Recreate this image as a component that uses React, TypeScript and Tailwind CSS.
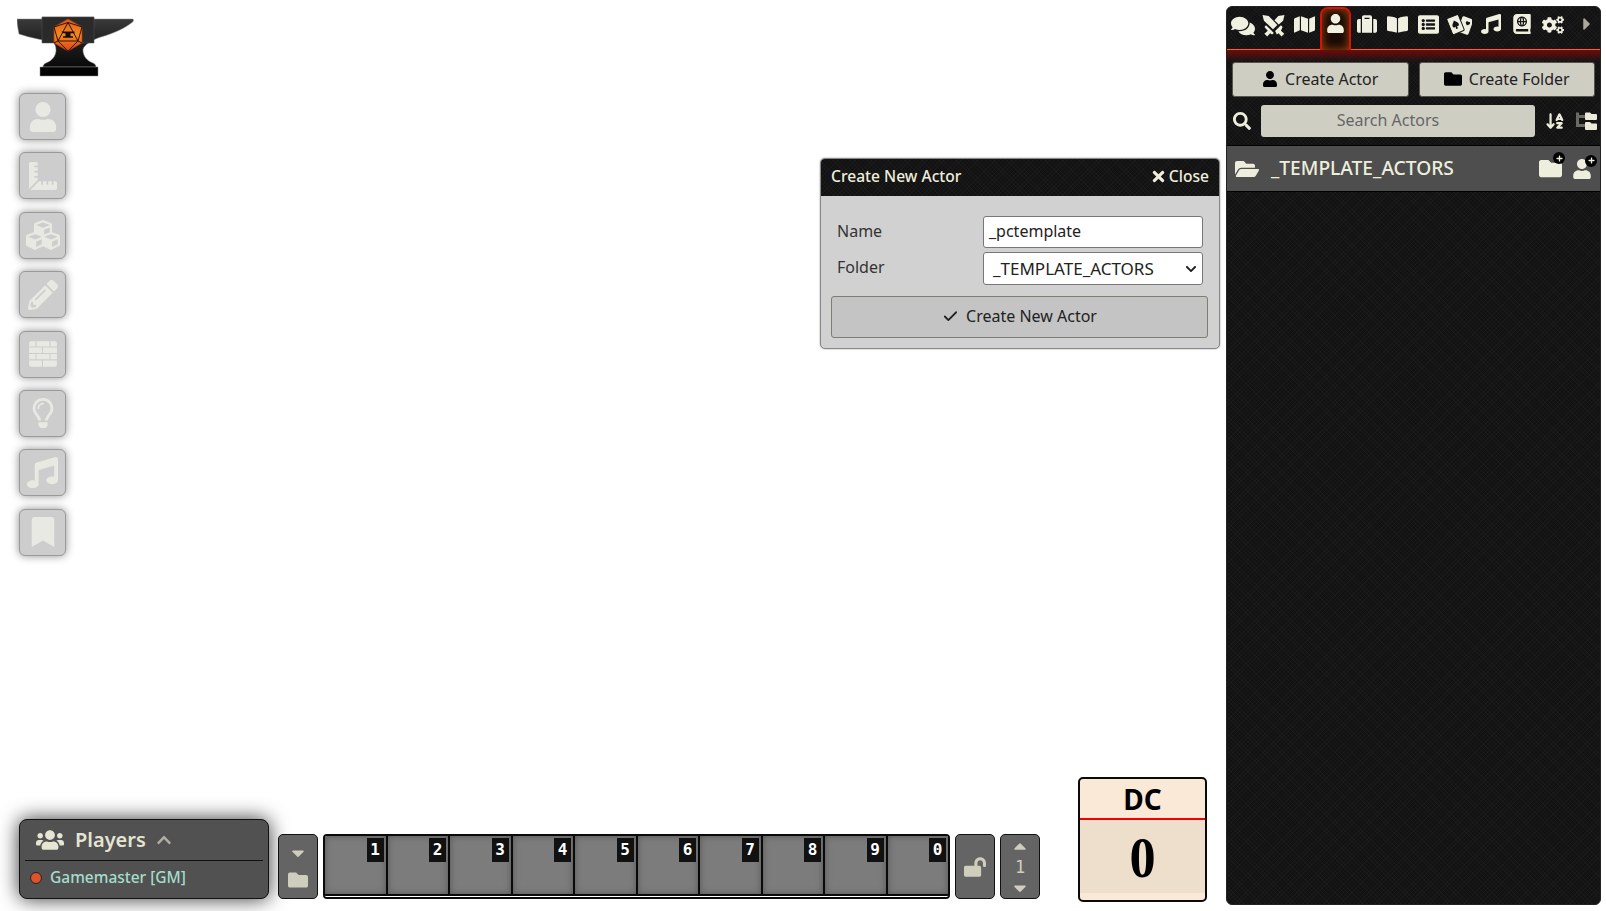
import React from "react";
import {
  FaComments, FaMap, FaUser, FaSuitcase, FaBookOpen, FaListAlt, FaMusic, FaAtlas, FaCogs, FaCaretRight,
  FaFolder, FaFolderOpen, FaSearch, FaTimes, FaUsers, FaChevronUp,
  FaCaretDown, FaCaretUp, FaLockOpen, FaRulerCombined, FaCubes, FaPencilAlt, FaRegLightbulb, FaBookmark, FaChevronDown, FaPlus,
} from "react-icons/fa";
import { FaArrowDownAZ } from "react-icons/fa6";
import { Check } from "lucide-react";

const texture = "bg-[#121212] bg-[repeating-linear-gradient(45deg,rgba(255,255,255,0.02)_0px,rgba(255,255,255,0.02)_1px,transparent_1px,transparent_3px),repeating-linear-gradient(-45deg,rgba(255,255,255,0.02)_0px,rgba(255,255,255,0.02)_1px,transparent_1px,transparent_3px)]";

function Swords({ className }: { className?: string }) {
  return (
    <svg viewBox="0 0 24 24" className={className} fill="currentColor">
      <path d="M0.500 1l6.500 1 9 9.500-4.500 4.500L2 7z" />
      <path d="M23.500 1L17 2l-4 4.500 4.500 4.500L22 7z" />
      <path d="M2.500 13.500l1.800-1.800 8 8L10.500 21.500l-2-1.500-3 3.500-3-3 3.500-3z" />
      <path d="M21.500 13.500l-1.800-1.800-6 6 1.800 3.800 1.800-1.500 3 3.500 3-3-3.500-3z" />
    </svg>
  );
}

function Cards({ className }: { className?: string }) {
  return (
    <svg viewBox="0 0 26 22" className={className}>
      <g transform="rotate(20 19 12)">
        <rect x="13" y="3" width="12" height="17" rx="1.500" fill="currentColor" />
        <path d="M20.500 7c-.8-1-2.300-.3-2.300 1 0 1.200 1.300 2 2.300 3 1-1 2.300-1.800 2.300-3 0-1.300-1.500-2-2.300-1z" fill="#121212" />
      </g>
      <g transform="rotate(-22 9 11)">
        <rect x="2.500" y="1.500" width="13" height="18" rx="1.500" fill="currentColor" stroke="#121212" strokeWidth="1" />
        <path d="M9 6c-1.500 2-3.500 3.300-3.500 5.200 0 1.500 1.800 2.200 2.900 1.200L7.800 15h2.400l-.6-2.600c1.100 1 2.900.3 2.900-1.200C12.500 9.300 10.500 8 9 6z" fill="#121212" />
      </g>
    </svg>
  );
}

function Bricks({ className }: { className?: string }) {
  return (
    <svg viewBox="0 0 28 28" className={className} fill="currentColor">
      <path d="M1 4a2 2 0 0 1 2-2h4v5H1zM8 2h12v5H8zM21 2h4a2 2 0 0 1 2 2v3h-6zM1 8h12v5H1zM14 8h13v5H14zM1 14h6v5H1zM8 14h12v5H8zM21 14h6v5h-6zM1 20h12v6H3a2 2 0 0 1-2-2zM14 20h13v4a2 2 0 0 1-2 2H14z" />
    </svg>
  );
}

function FolderTree({ className }: { className?: string }) {
  return (
    <svg viewBox="0 0 22 18" className={className}>
      <path d="M1 0.500h3v2.500h6v3H4v6h6v3H1z" fill="#6b6b66" />
      <path d="M10 1.500a1 1 0 0 1 1-1h4l1.500 1.500H21a1 1 0 0 1 1 1V7a1 1 0 0 1-1 1H11a1 1 0 0 1-1-1zM10 11a1 1 0 0 1 1-1h4l1.500 1.500H21a1 1 0 0 1 1 1V17a1 1 0 0 1-1 1H11a1 1 0 0 1-1-1z" fill="#ecebd9" />
    </svg>
  );
}

function Logo() {
  return (
    <svg viewBox="0 0 117 62" className="w-[117px] h-[62px]">
      <defs>
        <linearGradient id="an" x1="0" y1="0" x2="0" y2="1">
          <stop offset="0" stopColor="#3c3c3c" />
          <stop offset="0.6" stopColor="#1a1a1a" />
          <stop offset="1" stopColor="#0a0a0a" />
        </linearGradient>
        <linearGradient id="d20" x1="0" y1="0" x2="0" y2="1">
          <stop offset="0" stopColor="#e05a1a" />
          <stop offset="0.5" stopColor="#f28a1f" />
          <stop offset="1" stopColor="#d9441a" />
        </linearGradient>
      </defs>
      <path d="M0 3h25V1h52v2h38c2 0 2 2 0 3.500C108 12 98 17 84 21c-4 1-8 3-11 5-3 2-7 5-7 8 0 6 4 11 10 13 2 1 3 2 3 4H26c0-2 1-3 3-4 6-2 10-7 10-13 0-3-1-6-3-8-10-2-22-4-34-8C1 13 0 8 0 3z" fill="url(#an)" stroke="#8a8a8a" strokeWidth="0.5" />
      <rect x="23" y="51" width="58" height="9" fill="#030303" stroke="#8a8a8a" strokeWidth="0.5" />
      <path d="M25 1h52v26H25z" fill="#2a2a2a" stroke="#555" strokeWidth="0.5" />
      <path d="M51 3l14 8v16l-14 8-14-8V11z" fill="url(#d20)" stroke="#a83a0c" strokeWidth="0.8" />
      <path d="M51 6.500L41 25h20zM37 11l14-4.500L65 11M37 27l4-2 10 10 10-10 4 2M41 25l-4-14M61 25l4-14" fill="none" stroke="#321204" strokeWidth="1" />
      <path d="M44.500 15.500h13v1.800h-4v3h2.500v1.400H46v-1.400h2.500v-3c-2 0-4-.5-4-1.800z" fill="#1a0d05" />
    </svg>
  );
}

function ToolButton({ children }: { children: React.ReactNode }) {
  return (
    <div className="w-[47px] h-[47px] rounded-[6px] border border-[#9a9a9a] bg-[#cdcdcd] text-[#e9e9e3] shadow-[0_0_8px_rgba(0,0,0,0.45)] flex items-center justify-center">
      {children}
    </div>
  );
}

function Tab({ children, active }: { children: React.ReactNode; active?: boolean }) {
  return (
    <div
      className={
        active
          ? "w-[31px] h-[43px] -mb-px flex items-start pt-[5px] justify-center rounded-t-[8px] border-2 border-b-0 border-[#d81208] bg-[#1a0b05] shadow-[inset_0_0_10px_#a3480f] text-[#f0f0e0]"
          : "w-[31px] h-[43px] flex items-start pt-[7px] justify-center text-[#f0f0e0]"
      }
    >
      {children}
    </div>
  );
}

function Slot({ n }: { n: number }) {
  return (
    <div className="flex-1 h-full border-r-2 last:border-r-0 border-[#0a0a0a] bg-[#7c7c7c] shadow-[inset_0_0_6px_#555] flex justify-end items-start pt-[2px] pr-[2px]">
      <span className="w-[17px] h-[24px] bg-[#111] text-[#fff] font-bold text-[16px] leading-[24px] text-center font-['DejaVu_Sans_Mono',monospace]">
        {n}
      </span>
    </div>
  );
}

function PlusBadge({ className }: { className: string }) {
  return (
    <span className={"absolute w-[12px] h-[12px] rounded-full bg-[#000] text-[#f0f0e0] flex items-center justify-center " + className}>
      <FaPlus size={7} />
    </span>
  );
}

export default function App() {
  const tools = [
    <FaUser size={30} />,
    <FaRulerCombined size={28} />,
    <FaCubes size={34} />,
    <FaPencilAlt size={30} />,
    <Bricks className="w-[30px] h-[30px]" />,
    <FaRegLightbulb size={30} />,
    <FaMusic size={31} />,
    <FaBookmark size={30} />,
  ];
  return (
    <div className="relative w-[1606px] h-[911px] overflow-hidden bg-white flex font-['Noto_Sans',sans-serif]">
      <main className="flex-1 flex flex-col pl-[19px] pb-[12px]">
        <div className="h-[93px] pt-[16px] -ml-[2px]">
          <Logo />
        </div>
        <div className="flex flex-col gap-[12.4px]">
          {tools.map((t, i) => (
            <ToolButton key={i}>{t}</ToolButton>
          ))}
        </div>
        <div className="flex-1" />
        <div className="flex items-end">
          <div className="w-[250px] h-[80px] rounded-[8px] border border-[#111] bg-[#515151] shadow-[0_0_20px_rgba(0,0,0,0.8)] px-[5px] flex flex-col">
            <div className="h-[41px] border-b border-[#111] flex items-center pl-[11px] text-[#e6e4d2]">
              <FaUsers size={28} />
              <span className="ml-[11px] text-[20px] font-semibold">Players</span>
              <FaChevronUp size={16} className="ml-[10px] text-[#b0ae9e]" />
            </div>
            <div className="flex-1 flex items-center pl-[5px] pb-[3px]">
              <span className="w-[12px] h-[12px] rounded-full bg-[#e0532a] border border-[#222]" />
              <span className="ml-[8px] text-[15.5px] font-medium text-[#a5dccb]">Gamemaster [GM]</span>
            </div>
          </div>
          <div className="ml-[9px] w-[40px] h-[65px] rounded-[5px] border border-[#111] bg-[#646464] flex flex-col items-center justify-center gap-[7px] text-[#cfcdbc]">
            <FaCaretDown size={20} />
            <FaFolder size={20} />
          </div>
          <div className="ml-[5px] w-[627px] h-[65px] rounded-[4px] border-2 border-[#0a0a0a] flex flex-col overflow-hidden">
            <div className="flex-1 min-h-0 flex border-b-2 border-[#0a0a0a]">
              {[1, 2, 3, 4, 5, 6, 7, 8, 9, 0].map((n) => (
                <Slot key={n} n={n} />
              ))}
            </div>
            <div className="h-px bg-white" />
          </div>
          <div className="ml-[5px] w-[40px] h-[65px] rounded-[5px] border border-[#111] bg-[#646464] flex items-center justify-center text-[#cfcdbc]">
            <FaLockOpen size={22} />
          </div>
          <div className="ml-[5px] w-[40px] h-[65px] rounded-[5px] border border-[#111] bg-[#646464] flex flex-col items-center justify-center text-[#cfcdbc]">
            <FaCaretUp size={20} />
            <span className="text-[17px] leading-[22px] font-medium font-['DejaVu_Sans_Mono',monospace]">1</span>
            <FaCaretDown size={20} />
          </div>
          <div className="ml-[38px] -mb-[3px] w-[129px] h-[125px] rounded-[5px] border-2 border-[#0a0a0a] bg-[#fae9d6] flex flex-col overflow-hidden">
            <div className="h-[41px] border-b-2 border-[#f00000] text-center text-[28px] leading-[40px] font-bold text-black">DC</div>
            <div className="h-[73px] pt-[2px] bg-[#eddfcc] flex items-center justify-center">
              <span className="scale-x-[0.9] text-[58px] leading-[73px] font-bold text-black font-['Liberation_Serif',serif]">0</span>
            </div>
          </div>
        </div>
      </main>

      <aside className={"w-[375px] h-[899px] mt-[6px] mr-[5px] rounded-[6px] border border-[#222] flex flex-col " + texture}>
        <nav className="h-[43px] flex border-b border-[#ff6400]">
          <Tab><FaComments size={24} /></Tab>
          <Tab><Swords className="w-[23px] h-[23px]" /></Tab>
          <Tab><FaMap size={21} /></Tab>
          <Tab active><FaUser size={19} /></Tab>
          <Tab><FaSuitcase size={20} /></Tab>
          <Tab><FaBookOpen size={21} /></Tab>
          <Tab><FaListAlt size={21} /></Tab>
          <Tab><Cards className="w-[25px] h-[22px]" /></Tab>
          <Tab><FaMusic size={20} /></Tab>
          <Tab><FaAtlas size={20} /></Tab>
          <Tab><FaCogs size={22} /></Tab>
          <div className="ml-[9px] pt-[7px] text-[#a9a89a]"><FaCaretRight size={20} /></div>
        </nav>
        <div className="h-[12px] bg-gradient-to-b from-[#6b0b0b] to-transparent" />
        <div className="flex gap-[10px] px-[5px]">
          <button className="flex-1 h-[35px] pb-[2px] rounded-[3px] border border-[#55544c] bg-[#cfcec3] text-[#222] text-[16px] flex items-center justify-center gap-[7px]">
            <FaUser size={16} className="text-black" /> Create Actor
          </button>
          <button className="flex-1 h-[35px] pb-[2px] rounded-[3px] border border-[#55544c] bg-[#cfcec3] text-[#222] text-[16px] flex items-center justify-center gap-[7px]">
            <FaFolder size={18} className="text-black" /> Create Folder
          </button>
        </div>
        <div className="mt-[8px] flex items-center pl-[6px] h-[32px]">
          <FaSearch size={18} className="shrink-0 text-[#eeeedd]" />
          <div className="shrink-0 ml-[10px] w-[274px] h-[32px] pb-[2px] pr-[20px] rounded-[3px] bg-[#cfcec3] flex items-center justify-center text-[16px] text-[#666]">Search Actors</div>
          <FaArrowDownAZ size={20} className="shrink-0 ml-[10px] text-[#eeeedd]" />
          <FolderTree className="shrink-0 ml-[10px] w-[22px] h-[18px]" />
        </div>
        <div className="mt-[8px] h-[47px] border-y border-[#000] bg-[#4e4e4e] flex items-center pl-[8px] pr-[6px] text-[#eeeedd]">
          <FaFolderOpen size={24} />
          <span className="ml-[12px] text-[19.200px] font-medium">_TEMPLATE_ACTORS</span>
          <span className="flex-1" />
          <span className="relative mr-[10px]"><FaFolder size={23} /><PlusBadge className="-top-[5px] -right-[3px]" /></span>
          <span className="relative mr-[2px]"><FaUser size={20} /><PlusBadge className="-top-[4px] -right-[5px]" /></span>
        </div>
      </aside>

      <section className="absolute left-[820px] top-[158px] w-[400px] h-[191px] rounded-[5px] border border-[#888] bg-[#d1d1d1] overflow-hidden shadow-[0_0_2px_#999]">
        <header className={"h-[37px] pb-[2px] flex items-center justify-between px-[10px] text-[15.600px] font-medium text-[#efeedd] " + texture}>
          <span>Create New Actor</span>
          <span className="flex items-center gap-[2px]"><FaTimes size={17} /> Close</span>
        </header>
        <div className="px-[10px] pt-[20px]">
          <div className="flex items-center h-[32px] pl-[6px]">
            <span className="w-[146px] pb-[3px] text-[16px] text-[#333]">Name</span>
            <div className="w-[220px] h-[32px] rounded-[3px] border border-[#777] bg-white pl-[5px] text-[16px] leading-[29px] text-[#222]">_pctemplate</div>
          </div>
          <div className="mt-[4px] flex items-center h-[33px] pl-[6px]">
            <span className="w-[146px] pb-[3px] text-[16px] text-[#333]">Folder</span>
            <div className="w-[220px] h-[33px] rounded-[3px] border border-[#777] bg-white pl-[9px] pr-[5px] text-[17px] text-[#222] flex items-center justify-between">
              _TEMPLATE_ACTORS <FaChevronDown size={12} />
            </div>
          </div>
          <div className="mt-[11px] h-[42px] pb-[2px] w-[377px] rounded-[3px] border border-[#7e7d6e] bg-[#c4c4c4] flex items-center justify-center gap-[7px] text-[16px] text-[#222]">
            <Check size={17} strokeWidth={2.500} /> Create New Actor
          </div>
        </div>
      </section>
    </div>
  );
}
